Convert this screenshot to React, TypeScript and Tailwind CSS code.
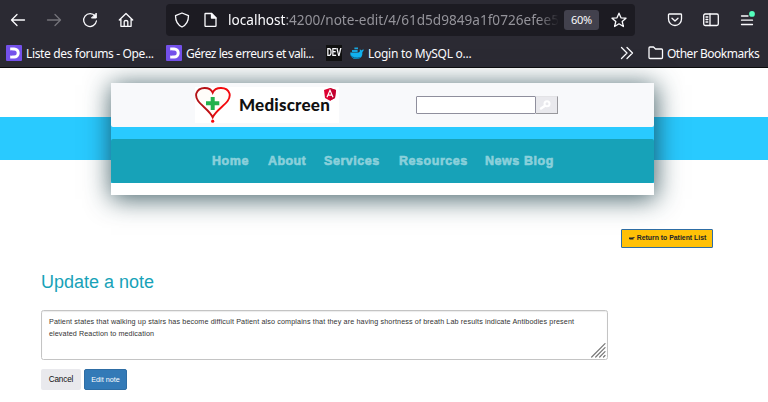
import React from "react";

const ui = "font-['Noto_Sans','Open_Sans',sans-serif]";
const arial = "font-['Liberation_Sans',Arial,sans-serif]";

function Svg({ w, h, className = "", sw = 1.3, children }: { w: number; h: number; className?: string; sw?: number; children: React.ReactNode }) {
  return (
    <svg width={w} height={h} viewBox={`0 0 ${w} ${h}`} fill="none" stroke="currentColor" strokeWidth={sw} strokeLinecap="round" strokeLinejoin="round" className={`block shrink-0 ${className}`}>
      {children}
    </svg>
  );
}

function OpenClassroomsIcon() {
  return (
    <Svg w={16} h={16}>
      <rect width="16" height="16" rx="1" fill="#7451eb" stroke="none" />
      <path d="M4.2 4H8.2A4 4 0 0 1 8.2 12H4.2" stroke="#fff" strokeWidth="3" strokeLinecap="butt" />
      <circle cx="5.5" cy="8" r="2.4" fill="#7451eb" stroke="none" />
    </Svg>
  );
}

function Toolbar() {
  return (
    <div className="flex h-[39px] items-center text-[#fbfbfe]">
      <Svg w={16} h={16} className="ml-[10px]"><path d="M1.5 8H14.5M7 2.5L1.5 8L7 13.5" /></Svg>
      <Svg w={16} h={16} className="ml-5 text-[#74737a]"><path d="M1.5 8H14.5M9 2.5L14.5 8L9 13.5" /></Svg>
      <Svg w={16} h={16} className="ml-5"><path d="M13.2 4.3A6.4 6.4 0 1 0 14.4 9" /><path d="M14.3 1.5V6H9.8Z" fill="currentColor" strokeWidth="1" /></Svg>
      <Svg w={16} h={16} className="ml-5"><path d="M1.3 8L8 1.5L14.7 8M2.9 7V14.3H13.1V7" /><path d="M6.2 14V9.6Q6.2 8.5 8 8.5T9.8 9.6V14" /></Svg>
      <div className="ml-[32px] flex h-8 w-[469px] items-center rounded-[4px] bg-[#1c1b22]">
        <Svg w={16} h={16} className="ml-2"><path d="M8 1L14.5 3.6C14.5 9 12.5 13 8 15C3.5 13 1.5 9 1.5 3.6Z" /></Svg>
        <Svg w={13} h={16} className="ml-[14px]"><path d="M1 2Q1 1.5 1.5 1.5H7.5L12 6V13.7Q12 14.3 11.3 14.3H1.7Q1 14.3 1 13.7Z" /><path d="M7.5 1.5V6H12Z" fill="currentColor" /></Svg>
        <div className={`ml-[11px] mt-px w-[331px] whitespace-nowrap text-[13.6px] leading-[20px] text-[#94939a] ${ui} [mask-image:linear-gradient(to_right,black_310px,transparent_331px)]`}>
          <span className="text-[#fbfbfe]">localhost</span>:4200/note-edit/4/61d5d9849a1f0726efee51
        </div>
        <div className={`ml-[5px] flex h-5 w-[35px] items-center justify-center rounded-[3px] bg-[#42414d] pt-px text-[11px] tracking-[-0.3px] ${ui}`}>60%</div>
        <Svg w={16} h={16} className="ml-3"><path d="M8 1.2L10 5.8L15 6.2L11.2 9.5L12.4 14.5L8 11.8L3.6 14.5L4.8 9.5L1 6.2L6 5.8Z" /></Svg>
      </div>
      <Svg w={16} h={16} className="ml-[32px]"><path d="M2.3 2H13.7Q14.5 2 14.5 2.8V7A6.5 6.5 0 0 1 1.5 7V2.8Q1.5 2 2.3 2Z" /><path d="M5 6.2L8 9L11 6.2" /></Svg>
      <Svg w={16} h={16} className="ml-5"><rect x=".7" y="2" width="14.6" height="11.5" rx="1.4" /><path d="M7 2V13.5M3 5H4.8M3 7.5H4.8M3 10H4.8" /></Svg>
      <Svg w={16} h={17} className="ml-5"><path d="M2.5 5H9M2.5 9.2H13.5M2.5 13.5H13.5" /><circle cx="13" cy="2.9" r="2.9" fill="#54ffbd" stroke="none" /></Svg>
    </div>
  );
}

function Bookmarks() {
  return (
    <div className={`flex h-7 items-center whitespace-nowrap pl-[6px] text-[12px] leading-4 text-[#fbfbfe] ${ui}`}>
      <OpenClassroomsIcon />
      <span className="ml-[4px] mt-[2px] w-[140px] tracking-[-0.35px]">Liste des forums - Ope...</span>
      <OpenClassroomsIcon />
      <span className="ml-[4px] mt-[2px] w-[140px] tracking-[-0.5px]">Gérez les erreurs et vali...</span>
      <span className="flex h-4 w-4 items-center justify-center bg-[#111] font-['Roboto',sans-serif] text-[8px] font-bold leading-none tracking-[-0.1px]"><span className="scale-y-125">DEV</span></span>
      <Svg w={16} h={16} className="ml-[7px]">
        <path d="M1.2 7.4H9.5Q11.5 7 10.6 4.6Q12 4.8 12.4 5.6Q13.4 4.2 14.8 4.4Q14.6 6.2 13.4 7Q14 14 7.4 14Q1.2 14 1.2 7.4Z" fill="#12b2f0" stroke="none" />
        <path d="M3 6H8.6M5.4 3.4H9" stroke="#19a5de" strokeWidth="1.8" strokeLinecap="butt" />
        <path d="M1.6 10.6Q5 14.2 10.5 12.8" stroke="#0c5f88" strokeWidth="1" />
      </Svg>
      <span className="ml-[3px] mt-[2px] w-[249px] tracking-[-0.27px]">Login to MySQL o...</span>
      <Svg w={16} h={16} className="ml-[2px]"><path d="M2.5 2.5L8 8L2.5 13.5M8 2.5L13.5 8L8 13.5" /></Svg>
      <Svg w={16} h={16} className="ml-[13px]"><path d="M1 3Q1 2 2 2H5.5L7.5 4H13.5Q14.5 4 14.5 5V12.5Q14.5 13.5 13.5 13.5H2Q1 13.5 1 12.5Z" /></Svg>
      <span className="ml-[3px] mt-[2px] tracking-[-0.5px]">Other Bookmarks</span>
    </div>
  );
}

function Logo() {
  return (
    <div className="flex h-9 w-36 bg-white">
      <svg width="36" height="36" viewBox="0 0 36 36" className="block shrink-0">
        <defs>
          <linearGradient id="heart" x1="0" x2="1">
            <stop offset=".3" stopColor="#b31217" />
            <stop offset=".65" stopColor="#f4090d" />
          </linearGradient>
        </defs>
        <path d="M17.7 5.6C15 -0.5 4 -.8 1.3 6.5C-.8 15.5 13.5 21 17.7 30.3C21.9 21 36.8 15.5 34.5 6.5C32 -.8 20.4 -.5 17.7 5.6Z" fill="#fffdf9" stroke="url(#heart)" strokeWidth="1.9" />
        <path d="M17.7 10V23M11 16.3H24.3" stroke="#22b14c" strokeWidth="4" />
        <circle cx="17.7" cy="34.2" r="1.6" fill="#f4090d" />
      </svg>
      <span className="ml-2 mt-[9px] w-[92px] shrink-0 whitespace-nowrap font-['Lato',sans-serif] text-[17px] font-black leading-[18px] tracking-[0.2px] text-[#111]">Mediscreen</span>
      <svg width="12" height="13" viewBox="0 0 12 13" className="-ml-[7px] mt-px block shrink-0">
        <path d="M6 0L12 2L11 10L6 12.8L1 10L0 2Z" fill="#dd0031" />
        <path d="M6 0L12 2L11 10L6 12.8Z" fill="#c3002f" />
        <path d="M3 9.2L6 2.3L9 9.2M4.3 7.2H7.7" fill="none" stroke="#fff" strokeWidth="1.2" />
      </svg>
    </div>
  );
}

function SiteHeader() {
  return (
    <header className="grid h-[152px]">
      <div className="col-start-1 row-start-1 mt-[49px] h-[43px] bg-[#29caff]" />
      <div className="z-10 col-start-1 row-start-1 ml-[111px] mt-[15px] h-[112px] w-[543px] bg-white shadow-[1px_3px_24px_1px_#143a42c8]">
        <div className="bg-[#29caff]">
          <div className="flex h-11 rounded-b-[2px] bg-[#f8f9fb] pl-[84px] pt-1">
            <Logo />
            <div className="ml-[77px] mt-[9px] flex h-[18px]">
              <div className="w-[120px] rounded-[1px] border border-[#8f8f9d] bg-white" />
              <div className="flex w-[22px] items-center border border-l-0 border-[#e3e3e6] border-b-[#98989c] border-r-[#98989c] bg-[#e9e9ed] pl-[3px]">
                <Svg w={12} h={10} className="text-white" sw={2}><circle cx="8" cy="3.8" r="2.5" /><path d="M6 5.8L2 8.6" strokeWidth="2.4" /></Svg>
              </div>
            </div>
          </div>
          <nav className="mt-3 flex h-11 items-center gap-[18px] rounded-[2px] bg-[#17a2b8] pl-[101px] font-['Liberation_Sans',sans-serif] text-[12.5px] font-bold leading-4 tracking-[0.55px] text-[#8bd0db] [-webkit-text-stroke:0.6px_#8bd0db]">
            <a className="w-[38px] whitespace-nowrap">Home</a>
            <a className="w-[38px] whitespace-nowrap tracking-[0.4px]">About</a>
            <a className="w-[57px] whitespace-nowrap">Services</a>
            <a className="w-[68px] whitespace-nowrap">Resources</a>
            <a className="whitespace-nowrap">News Blog</a>
          </nav>
        </div>
      </div>
    </header>
  );
}

export default function App() {
  return (
    <div className="h-[402px] w-[768px] overflow-hidden bg-white">
      <div className="h-[68px] border-b border-[#0c0c0d] bg-[#2b2a33]">
        <Toolbar />
        <Bookmarks />
      </div>
      <SiteHeader />
      <main className={`pl-[41px] pr-[55px] ${arial}`}>
        <div className="flex justify-end pt-[9px]">
          <button className="flex h-[19px] w-[92px] items-center justify-center whitespace-nowrap rounded-[1px] border border-[#2e6da4] bg-[#ffc107] pl-px text-[6.9px] font-bold leading-none text-[#212529]">
            <Svg w={6} h={5} className="mr-[2px]"><path d="M0 1.5H3L5.5 1V2H4.5V3.6H1L0 3Z" fill="#212529" stroke="none" /></Svg>
            Return to Patient List
          </button>
        </div>
        <h1 className="mt-6 text-[18px] leading-5 text-[#17a2b8]">Update a note</h1>
        <div className="mt-[18px] flex h-[50px] w-[567px] justify-between rounded-[2.5px] border border-[#c4c4c4] bg-white pl-[7px] pt-[5px] shadow-[inset_0_1px_1px_rgba(0,0,0,.08)]">
          <p className="whitespace-nowrap text-[7.2px] leading-3 tracking-[0.12px] text-[#333]">
            Patient states that walking up stairs has become difficult Patient also complains that they are having shortness of breath Lab results indicate Antibodies present<br />
            <span className="tracking-[0.09px]">elevated Reaction to medication</span>
          </p>
          <Svg w={15} h={15} className="mb-[1px] mr-[1px] self-end text-[#777]" sw={1.2}><path d="M.7 14L14 .7M4.7 14L14 4.7M8.7 14L14 8.7M12.5 14L14 12.5" /></Svg>
        </div>
        <div className="mt-[9px] flex gap-[3px]">
          <button className="h-[21px] w-10 rounded-[2px] bg-[#e9e9ed] pt-px text-[8.2px] leading-none tracking-[-0.15px] text-[#111]">Cancel</button>
          <button className="h-[21px] w-[43px] whitespace-nowrap rounded-[2px] border border-[#2e6da4] bg-[#337ab7] text-[7.2px] leading-none text-white">Edit note</button>
        </div>
      </main>
    </div>
  );
}
